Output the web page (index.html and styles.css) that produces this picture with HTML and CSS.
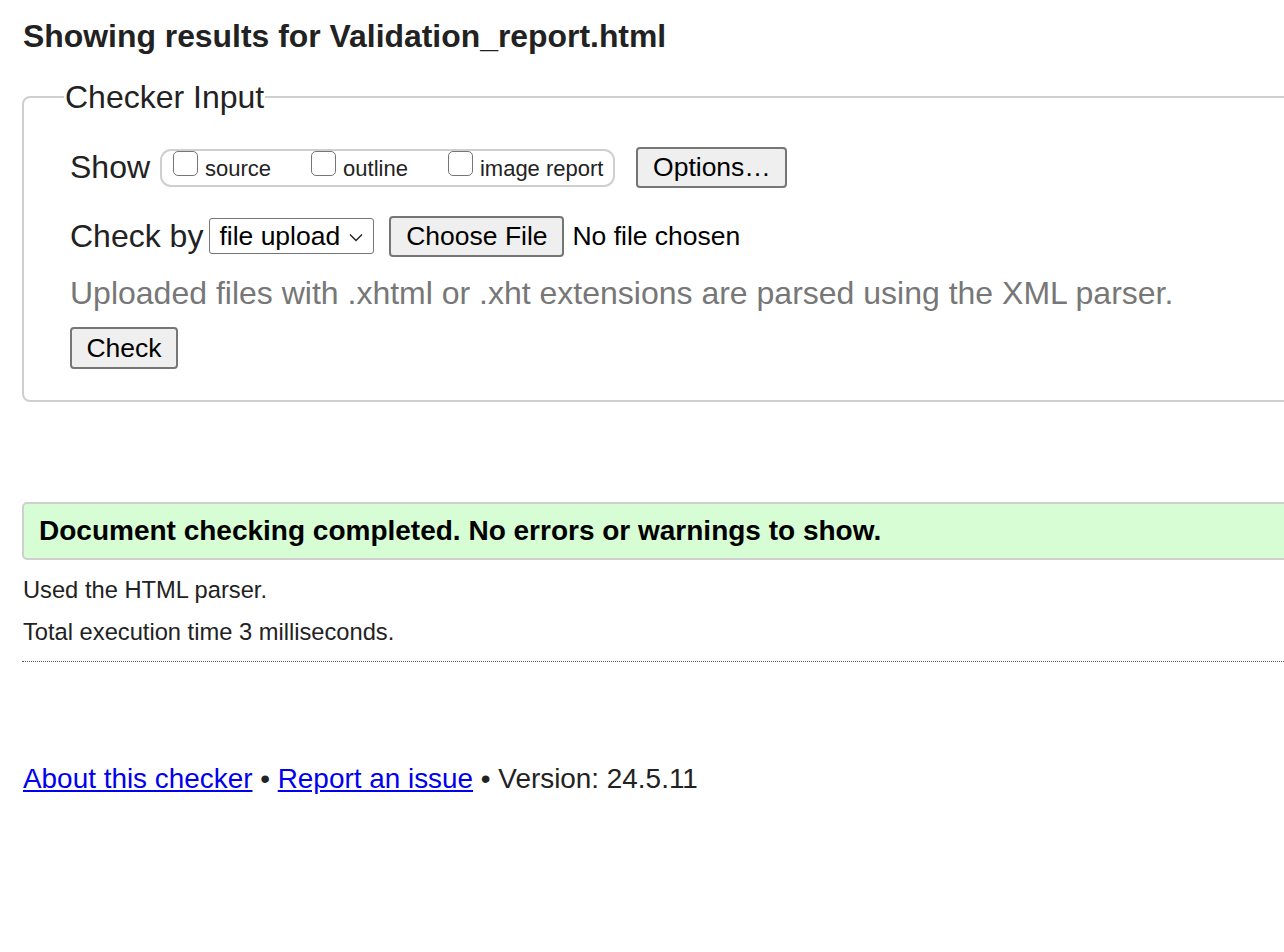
FILE: index.html
```html
<!DOCTYPE html>
<html lang="en">
<head>
<meta charset="utf-8">
<title>Showing results for Validation_report.html - Nu Html Checker</title>
<link rel="stylesheet" href="styles.css">
</head>
<body>
<h2 class="title">Showing results for Validation_report.html</h2>
<form class="checker-form">
  <fieldset class="checker-input">
    <legend class="legend">Checker Input</legend>
    <div class="row show-row">
      <span class="row-label">Show</span>
      <span class="show-group">
        <label class="cb-item"><span class="cb"></span><span class="cb-text">source</span></label>
        <label class="cb-item"><span class="cb"></span><span class="cb-text">outline</span></label>
        <label class="cb-item"><span class="cb"></span><span class="cb-text">image report</span></label>
      </span>
      <span class="btn btn-options">Options…</span>
    </div>
    <div class="row check-row">
      <span class="row-label">Check by</span>
      <span class="select">file upload
        <svg class="chev" width="14" height="9" viewBox="0 0 14 9"><path d="M1 1.5 L7 7.5 L13 1.5" fill="none" stroke="#222" stroke-width="1.4"/></svg>
      </span>
      <span class="btn btn-file">Choose File</span>
      <span class="no-file">No file chosen</span>
    </div>
    <p class="hint">Uploaded files with .xhtml or .xht extensions are parsed using the XML parser.</p>
    <div class="row submit-row">
      <span class="btn btn-check">Check</span>
    </div>
  </fieldset>
</form>
<div class="success">Document checking completed. No errors or warnings to show.</div>
<p class="details">Used the HTML parser.</p>
<p class="details">Total execution time 3 milliseconds.</p>
<hr class="sep">
<p class="footer"><a href="#">About this checker</a> • <a href="#">Report an issue</a> • Version: 24.5.11</p>
</body>
</html>
```
FILE: styles.css
```css
html {
  overflow-x: hidden;
}
body {
  margin: 0;
  padding: 0 0 0 22px;
  font-family: "Liberation Sans", Arial, Helvetica, sans-serif;
  color: #222;
  background: #fff;
  width: 1400px;
}
.title {
  margin: 0;
  padding-top: 16px;
  padding-left: 1px;
  font-size: 31.9px;
  line-height: 40px;
  font-weight: bold;
  color: #222;
}
.checker-form {
  margin: 0;
  padding-top: 23px;
}
.checker-input {
  margin: 0;
  border: 2px solid #cfcfcf;
  border-radius: 8px;
  padding: 31px 20px 31px 46px;
  position: relative;
}
.legend {
  font-size: 32px;
  padding: 0 1px;
  margin-left: -6px;
  color: #222;
  line-height: 36px;
}
.row {
  display: flex;
  align-items: center;
}
.row-label {
  font-size: 32px;
  color: #222;
  margin-right: 10px;
}
.show-row {
  height: 42px;
}
.show-group {
  display: flex;
  align-items: flex-start;
  height: 38px;
  border: 2px solid #cfcfcf;
  border-radius: 11px;
  padding: 0 10px 0 11px;
  margin-right: 21px;
  gap: 40px;
  margin-top: 2px;
  box-sizing: border-box;
}
.cb-item {
  display: flex;
  align-items: flex-start;
  font-size: 22px;
  color: #222;
}
.cb {
  width: 25px;
  height: 25px;
  border: 1.5px solid #767676;
  border-radius: 5px;
  margin-right: 7px;
  box-sizing: border-box;
  background: #fff;
}
.cb-text {
  line-height: 22px;
  margin-top: 7px;
}
.btn {
  display: inline-flex;
  align-items: center;
  justify-content: center;
  background: #efefef;
  border: 2px solid #767676;
  border-radius: 4px;
  font-size: 26.5px;
  color: #000;
  box-sizing: border-box;
  height: 41px;
}
.btn-options {
  width: 151px;
}
.check-row {
  margin-top: 27px;
  height: 42px;
}
.check-row .row-label {
  margin-right: 6px;
}
.select {
  display: inline-flex;
  align-items: center;
  height: 36px;
  width: 165px;
  box-sizing: border-box;
  border: 1.5px solid #767676;
  border-radius: 3px;
  font-size: 26.5px;
  color: #000;
  padding-left: 9px;
  margin-right: 15px;
}
.chev {
  margin-left: 9px;
  margin-top: 2px;
}
.btn-file {
  width: 175px;
  margin-right: 8px;
}
.no-file {
  font-size: 26.5px;
  color: #000;
}
.hint {
  margin: 15px 0 0 0;
  font-size: 32px;
  line-height: 42px;
  color: #777;
}
.submit-row {
  margin-top: 13px;
}
.btn-check {
  width: 108px;
  height: 42px;
}
.success {
  margin-top: 100px;
  background: #d6fdd4;
  border: 2px solid #cfcfcf;
  border-radius: 5px;
  height: 58px;
  box-sizing: border-box;
  padding-left: 15px;
  display: flex;
  align-items: center;
  font-size: 28px;
  font-weight: bold;
  color: #000;
}
.details {
  margin: 0;
  padding-left: 1px;
  font-size: 23.7px;
  line-height: 42px;
  color: #222;
}
.details:first-of-type {
  margin-top: 9px;
}
.sep {
  margin: 8px 0 0 0;
  border: 0;
  border-top: 1.5px dotted #555;
  height: 0;
}
.footer {
  margin: 99px 0 0 0;
  padding-left: 1px;
  font-size: 27.9px;
  line-height: 36px;
  color: #222;
}
.footer a {
  color: #0000ee;
  text-decoration: underline;
}
```
